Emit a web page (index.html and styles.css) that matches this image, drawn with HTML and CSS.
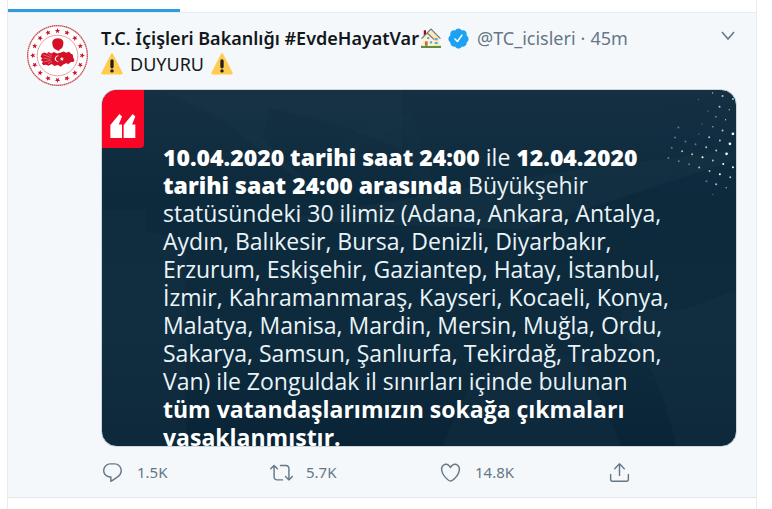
FILE: index.html
```html
<!DOCTYPE html>
<html lang="tr">
<head>
    <meta charset="UTF-8">
    <meta name="viewport" content="width=device-width, initial-scale=1.0">
    <title>T.C. İçişleri Bakanlığı</title>
    <link rel="stylesheet" href="styles.css">
</head>

<body>

<main class="timeline">
  <div class="tabs">
    <div class="tab-active"></div>
  </div>

  <article class="tweet">
    <a class="avatar" href="#" aria-label="T.C. İçişleri Bakanlığı">
      <svg viewBox="0 0 180 180">
        <defs>
          <path id="star" d="M90 9l2 5.500 6 .2-4.700 3.700 1.700 5.800-5-3.400-5 3.400 1.700-5.800-4.700-3.700 6-.2z"/>
        </defs>
        <circle cx="90" cy="90" r="90" fill="#fff"/>
        <circle cx="90" cy="90" r="88" fill="none" stroke="#c8525c" stroke-width="4" stroke-dasharray="5 1"/>
        <circle cx="90" cy="90" r="60" fill="none" stroke="#d9707a" stroke-width="2"/>
        <g fill="#c9152a">
          <use href="#star"/>
          <use href="#star" transform="rotate(22.5 90 90)"/>
          <use href="#star" transform="rotate(45 90 90)"/>
          <use href="#star" transform="rotate(67.5 90 90)"/>
          <use href="#star" transform="rotate(90 90 90)"/>
          <use href="#star" transform="rotate(112.5 90 90)"/>
          <use href="#star" transform="rotate(135 90 90)"/>
          <use href="#star" transform="rotate(157.5 90 90)"/>
          <use href="#star" transform="rotate(180 90 90)"/>
          <use href="#star" transform="rotate(202.5 90 90)"/>
          <use href="#star" transform="rotate(225 90 90)"/>
          <use href="#star" transform="rotate(247.5 90 90)"/>
          <use href="#star" transform="rotate(270 90 90)"/>
          <use href="#star" transform="rotate(292.5 90 90)"/>
          <use href="#star" transform="rotate(315 90 90)"/>
          <use href="#star" transform="rotate(337.5 90 90)"/>
        </g>
        <path fill="#d3122a" d="M75 48q4-9 16-9 12 0 16 9 2 10-2 18-4 6-9 6l-1 5-7-3q-9-3-11-9-4-8-2-17z"/>
        <path fill="#d3122a" d="M44 84l8-3 6 3 6-4 8 4 7-4 10 4 9-2 10-4 8 4 8-3 6 6 5 2 1 8 4 8-3 6-7 0-8 6-7-2-9 4-6 6-9-5-10 3-8-6-10 5-7-3-7 2-5-5 3-6-6-4 4-6-5-4z"/>
        <path stroke="#fff" stroke-width="1" fill="none" d="M48 88l24 8M48 98l22 3M50 109l20-5M58 83l16 9M62 114l12-7"/>
        <path fill="#fff" d="M96 92a9 9 0 1 0 0 15 8 8 0 1 1 0-15z"/>
        <path fill="#fff" d="M103 94l2 4 4 .5-3 3 1 4-4-2-4 2 1-4-3-3 4-.5z"/>
      </svg>
    </a>

    <div class="content">
      <header class="tweet-header">
        <a class="name" href="#">T.C. İçişleri Bakanlığı #EvdeHayatVar</a>
        <svg class="house" viewBox="0 0 36 36">
          <path fill="#5c913b" d="M0 32h36v4H0z"/>
          <path fill="#ffe8b6" d="M3 17L17 3l16 14v15H3z"/>
          <path fill="#fff3d3" d="M4 20l9-9 9 9v12H4z"/>
          <path fill="#a0041e" d="M5 4h4v6l-4 4z"/>
          <path fill="none" stroke="#66757f" stroke-width="2" d="M1 19L18 2l17 17M11 9l13 12"/>
          <path fill="#c1694f" d="M7 24h5v8H7z"/>
          <path fill="#55acee" d="M16 24h4v4h-4zM25 18h5v4h-5zM25 25h5v4h-5zM11 16h4v4h-4z"/>
        </svg>
        <svg class="verified" viewBox="0 0 24 24">
          <path fill="#1da1f2" d="M22.500 12.500c0-1.580-.875-2.950-2.148-3.600.154-.435.238-.905.238-1.400 0-2.210-1.710-3.998-3.818-3.998-.47 0-.92.084-1.336.25C14.818 2.415 13.510 1.500 12 1.500s-2.816.917-3.437 2.250c-.415-.165-.866-.25-1.336-.25-2.110 0-3.818 1.790-3.818 4 0 .494.083.964.237 1.400-1.272.65-2.147 2.018-2.147 3.600 0 1.495.782 2.798 1.942 3.486-.02.170-.032.340-.032.514 0 2.210 1.708 4 3.818 4 .47 0 .92-.086 1.335-.25.620 1.334 1.926 2.250 3.437 2.250 1.512 0 2.818-.916 3.437-2.250.415.163.865.248 1.336.248 2.110 0 3.818-1.790 3.818-4 0-.174-.012-.344-.033-.513 1.158-.687 1.943-1.990 1.943-3.484z"/>
          <path fill="none" stroke="#fff" stroke-width="1.600" stroke-linecap="round" stroke-linejoin="round" d="M8.300 12.500l2.600 2.600 4.700-6.600"/>
        </svg>
        <a class="handle" href="#">@TC_icisleri</a>
        <span class="dot">·</span>
        <a class="time" href="#">45m</a>
        <button class="more" type="button" aria-label="Daha fazla">
          <svg viewBox="0 0 14 10"><path d="M1 1l6 7 6-7"/></svg>
        </button>
      </header>

      <p class="tweet-text">
        <svg class="warning" viewBox="0 0 36 36">
          <path fill="#ffcc4d" d="M2.650 35C.81 35-.01 33.660.84 32L16.460 1.250c.85-1.660 2.230-1.660 3.070 0L35.160 32c.85 1.660.03 3-1.800 3z"/>
          <path fill="#231f20" d="M15.300 13a2.700 2.700 0 0 1 5.400 0v9.500a2.700 2.700 0 0 1-5.400 0zM18 26.500a2.800 2.800 0 1 1 0 5.600 2.800 2.800 0 0 1 0-5.600z"/>
        </svg>
        <span>DUYURU</span>
        <svg class="warning" viewBox="0 0 36 36">
          <path fill="#ffcc4d" d="M2.650 35C.81 35-.01 33.660.84 32L16.460 1.250c.85-1.660 2.230-1.660 3.070 0L35.160 32c.85 1.660.03 3-1.800 3z"/>
          <path fill="#231f20" d="M15.300 13a2.700 2.700 0 0 1 5.400 0v9.500a2.700 2.700 0 0 1-5.400 0zM18 26.500a2.800 2.800 0 1 1 0 5.600 2.800 2.800 0 0 1 0-5.600z"/>
        </svg>
      </p>

      <div class="media">
        <svg class="scenery" viewBox="0 0 634 356" preserveAspectRatio="none">
          <path d="M0 120h44v20l40 12v204H0z" opacity=".3"/>
          <path d="M60 0h240v60l-60-24-72-18-8 30 60 60L120 30z" opacity=".4"/>
          <path d="M230 60q30-30 80-35l26 84h-20l-16-70q-30 0-50 30z" opacity=".3"/>
          <path d="M180 130l290-50 164-20v10L420 140z" opacity=".4"/>
          <path d="M520 220h60l54-20v156h-60q-20-90-54-110z" opacity=".3"/>
          <path d="M370 290q60-40 110-20l40 86H340z" opacity=".3"/>
        </svg>
        <svg class="sparkle" viewBox="460 270 212 320" fill="#a9c3cf">
          <g opacity=".5">
            <circle cx="560" cy="298" r="2"/><circle cx="588" cy="333" r="2"/><circle cx="571" cy="372" r="2"/>
            <circle cx="500" cy="382" r="3"/><circle cx="561" cy="402" r="2"/><circle cx="490" cy="412" r="3"/>
            <circle cx="480" cy="443" r="3"/><circle cx="470" cy="473" r="3"/><circle cx="501" cy="483" r="3"/>
            <circle cx="521" cy="424" r="3"/><circle cx="551" cy="432" r="3"/><circle cx="584" cy="543" r="3"/>
            <circle cx="603" cy="582" r="2"/><circle cx="532" cy="492" r="3"/>
          </g>
          <circle cx="602" cy="279" r="2"/><circle cx="632" cy="288" r="3"/><circle cx="663" cy="297" r="3"/>
          <circle cx="623" cy="320" r="3"/><circle cx="652" cy="329" r="2"/><circle cx="612" cy="350" r="2"/>
          <circle cx="641" cy="359" r="2"/><circle cx="603" cy="380" r="2"/><circle cx="632" cy="391" r="3"/>
          <circle cx="592" cy="411" r="3"/><circle cx="624" cy="421" r="3"/><circle cx="583" cy="441" r="3"/>
          <circle cx="613" cy="451" r="3"/><circle cx="511" cy="453" r="3"/><circle cx="541" cy="462" r="3"/>
          <circle cx="603" cy="481" r="3"/><circle cx="562" cy="502" r="3"/><circle cx="593" cy="512" r="3"/>
          <circle cx="655" cy="531" r="3"/><circle cx="613" cy="552" r="3"/><circle cx="643" cy="562" r="2"/>
          <g fill="#fff">
            <circle cx="663" cy="401" r="4"/><circle cx="654" cy="431" r="4"/><circle cx="644" cy="461" r="4"/>
            <circle cx="572" cy="471" r="3"/><circle cx="634" cy="491" r="3"/><circle cx="663" cy="501" r="3"/>
            <circle cx="624" cy="522" r="3"/>
          </g>
        </svg>
        <div class="quote-mark">
          <svg viewBox="0 0 78 74">
            <path fill="#fff" d="M0 74V34L28 0l8 8-10 24h10v42zM41 74V34L69 0l8 8-10 24h10v42z"/>
          </svg>
        </div>
        <p class="announcement">
          <b class="date">10.04.2020 tarihi saat 24:00</b> ile <b class="date">12.04.2020</b><br>
          <b class="date">tarihi saat 24:00 arasında</b> Büyükşehir<br>
          statüsündeki 30 ilimiz (Adana, Ankara, Antalya,<br>
          Aydın, Balıkesir, Bursa, Denizli, Diyarbakır,<br>
          Erzurum, Eskişehir, Gaziantep, Hatay, İstanbul,<br>
          İzmir, Kahramanmaraş, Kayseri, Kocaeli, Konya,<br>
          Malatya, Manisa, Mardin, Mersin, Muğla, Ordu,<br>
          Sakarya, Samsun, Şanlıurfa, Tekirdağ, Trabzon,<br>
          Van) ile Zonguldak il sınırları içinde bulunan<br>
          <b>tüm vatandaşlarımızın sokağa çıkmaları</b><br>
          <b>yasaklanmıştır.</b>
        </p>
      </div>

      <div class="actions">
        <button class="action" type="button">
          <svg viewBox="0 0 24 24"><path d="M14.046 2.242l-4.148-.01h-.002c-4.374 0-7.800 3.427-7.800 7.802 0 4.098 3.186 7.206 7.465 7.370v3.828c0 .108.044.286.120.403.142.225.384.347.632.347.138 0 .277-.038.402-.118.264-.168 6.473-4.140 8.088-5.506 1.902-1.610 3.040-3.970 3.043-6.312v-.017c-.006-4.367-3.430-7.787-7.800-7.788zm3.787 12.972c-1.134.96-4.862 3.405-6.772 4.643V16.670c0-.414-.335-.75-.75-.75h-.396c-3.660 0-6.318-2.476-6.318-5.886 0-3.534 2.768-6.302 6.300-6.302l4.147.010h.002c3.532 0 6.300 2.766 6.302 6.296-.003 1.910-.942 3.844-2.514 5.176z"/></svg>
          <span>1.5K</span>
        </button>
        <button class="action" type="button">
          <svg viewBox="0 0 24 24"><path d="M23.770 15.670c-.292-.293-.767-.293-1.060 0l-2.220 2.220V7.650c0-2.068-1.683-3.750-3.750-3.750h-5.850c-.414 0-.75.336-.75.750s.336.750.750.750h5.850c1.240 0 2.250 1.010 2.250 2.250v10.240l-2.220-2.220c-.293-.293-.768-.293-1.060 0s-.294.768 0 1.060l3.500 3.500c.145.147.337.220.530.220s.383-.072.530-.220l3.500-3.500c.294-.292.294-.767 0-1.060zm-10.660 3.280H7.260c-1.240 0-2.250-1.010-2.250-2.250V6.460l2.220 2.220c.148.147.340.220.532.220s.384-.073.530-.220c.293-.293.293-.768 0-1.060l-3.500-3.500c-.293-.294-.768-.294-1.060 0l-3.500 3.500c-.294.292-.294.767 0 1.060s.767.293 1.060 0l2.220-2.220V16.700c0 2.068 1.683 3.750 3.750 3.750h5.850c.414 0 .750-.336.750-.750s-.337-.750-.750-.750z"/></svg>
          <span>5.7K</span>
        </button>
        <button class="action" type="button">
          <svg viewBox="0 0 24 24"><path d="M12 21.638h-.014C9.403 21.590 1.950 14.856 1.950 8.478c0-3.064 2.525-5.754 5.403-5.754 2.290 0 3.830 1.580 4.646 2.730.814-1.148 2.354-2.730 4.645-2.730 2.880 0 5.404 2.690 5.404 5.755 0 6.376-7.454 13.110-10.037 13.157H12zM7.354 4.225c-2.080 0-3.903 1.988-3.903 4.255 0 5.740 7.034 11.596 8.550 11.658 1.518-.062 8.550-5.917 8.550-11.658 0-2.267-1.823-4.255-3.903-4.255-2.528 0-3.940 2.936-3.952 2.965-.230.562-1.156.562-1.387 0-.014-.03-1.425-2.965-3.954-2.965z"/></svg>
          <span>14.8K</span>
        </button>
        <button class="action" type="button" aria-label="Paylaş">
          <svg viewBox="0 0 24 24"><path d="M17.530 7.470l-5-5c-.293-.293-.768-.293-1.060 0l-5 5c-.294.293-.294.768 0 1.060s.767.294 1.060 0l3.720-3.720V15c0 .414.336.750.750.750s.750-.336.750-.750V4.810l3.720 3.720c.146.147.338.220.530.220s.384-.072.530-.220c.293-.293.293-.767 0-1.060z"/><path d="M19.708 21.944H4.292C3.028 21.944 2 20.916 2 19.652V14c0-.414.336-.750.750-.750s.750.336.750.750v5.652c0 .437.355.792.792.792h15.416c.437 0 .792-.355.792-.792V14c0-.414.336-.750.750-.750s.750.336.750.750v5.652c0 1.264-1.028 2.292-2.292 2.292z"/></svg>
        </button>
      </div>
    </div>
  </article>
</main>

</body>
</html>
```
FILE: styles.css
```css
* {
    box-sizing: border-box;
}

body {
    font-family: "Noto Sans", "Open Sans", sans-serif;
    background-color: #fff;
    color: #14171a;
    margin: 0;
    padding: 0 15px 0 7px;
}

a {
    color: inherit;
    text-decoration: none;
}

button {
    background: none;
    border: none;
    padding: 0;
    font-family: inherit;
    color: #657786;
    cursor: pointer;
}

svg {
    display: block;
    flex-shrink: 0;
}

.timeline {
    min-height: 100vh;
    border-left: 1px solid #e6ecf0;
    border-right: 1px solid #e6ecf0;
}

.tabs {
    padding-top: 9px;
    border-bottom: 1px solid #e6ecf0;
}

.tab-active {
    width: 23%;
    height: 3px;
    background-color: #2d9de0;
}

.tweet {
    display: flex;
    gap: 13px;
    padding: 12px 19px 0 19px;
    background-color: #f5f8fb;
    border-bottom: 1px solid #e1e8ed;
}

.avatar {
    flex-shrink: 0;
    width: 61px;
}

.content {
    flex: 1;
    min-width: 0;
}

.tweet-header {
    display: flex;
    align-items: center;
    height: 26px;
    font-size: 18px;
    line-height: 26px;
    color: #657786;
    white-space: nowrap;
}

.name {
    font-weight: 600;
    color: #14171a;
}

.house {
    width: 20px;
    height: 20px;
    margin: 0 6px 0 2px;
}

.verified {
    width: 23px;
    height: 23px;
    margin-right: 7px;
}

.dot {
    margin: 0 5px;
}

.more {
    margin-left: auto;
    padding: 0 2px 4px;
}

.more svg {
    width: 14px;
    height: 10px;
    fill: none;
    stroke: #657786;
    stroke-width: 1.5;
}

.tweet-text {
    display: flex;
    align-items: center;
    gap: 7px;
    margin: 0 0 12px;
    font-size: 18px;
    line-height: 26px;
}

.warning {
    width: 22px;
    height: 22px;
}

.media {
    position: relative;
    height: 358px;
    overflow: hidden;
    border: 1px solid #ccd6dd;
    border-radius: 16px;
    background: linear-gradient(#153042, #0d2a3d 30%, #0e2b3e 70%, #0a2437);
}

.scenery {
    position: absolute;
    top: 0;
    left: 0;
    width: 100%;
    height: 100%;
    fill: #183647;
}

.sparkle {
    position: absolute;
    top: 0;
    right: 0;
    width: 71px;
    height: 107px;
}

.quote-mark {
    position: absolute;
    top: 0;
    left: 0;
    width: 42px;
    height: 58px;
    padding: 24px 8px 0;
    background-color: #fb0526;
    border-radius: 0 0 4px 0;
}

.quote-mark svg {
    width: 26px;
    height: 24px;
}

.announcement {
    position: relative;
    margin: 53px 0 0 61px;
    font-family: "Open Sans", "Noto Sans", sans-serif;
    font-size: 23px;
    line-height: 28px;
    color: #eaf4f8;
    white-space: nowrap;
}

.announcement b {
    color: #fff;
}

.announcement .date {
    font-weight: 800;
}

.actions {
    display: flex;
    height: 50px;
}

.action {
    display: flex;
    flex-shrink: 0;
    align-items: center;
    gap: 13px;
    width: 169px;
    font-size: 15px;
    line-height: 20px;
}

.action:last-child {
    width: auto;
}

.action svg {
    width: 23px;
    height: 23px;
    fill: #657786;
}
```
